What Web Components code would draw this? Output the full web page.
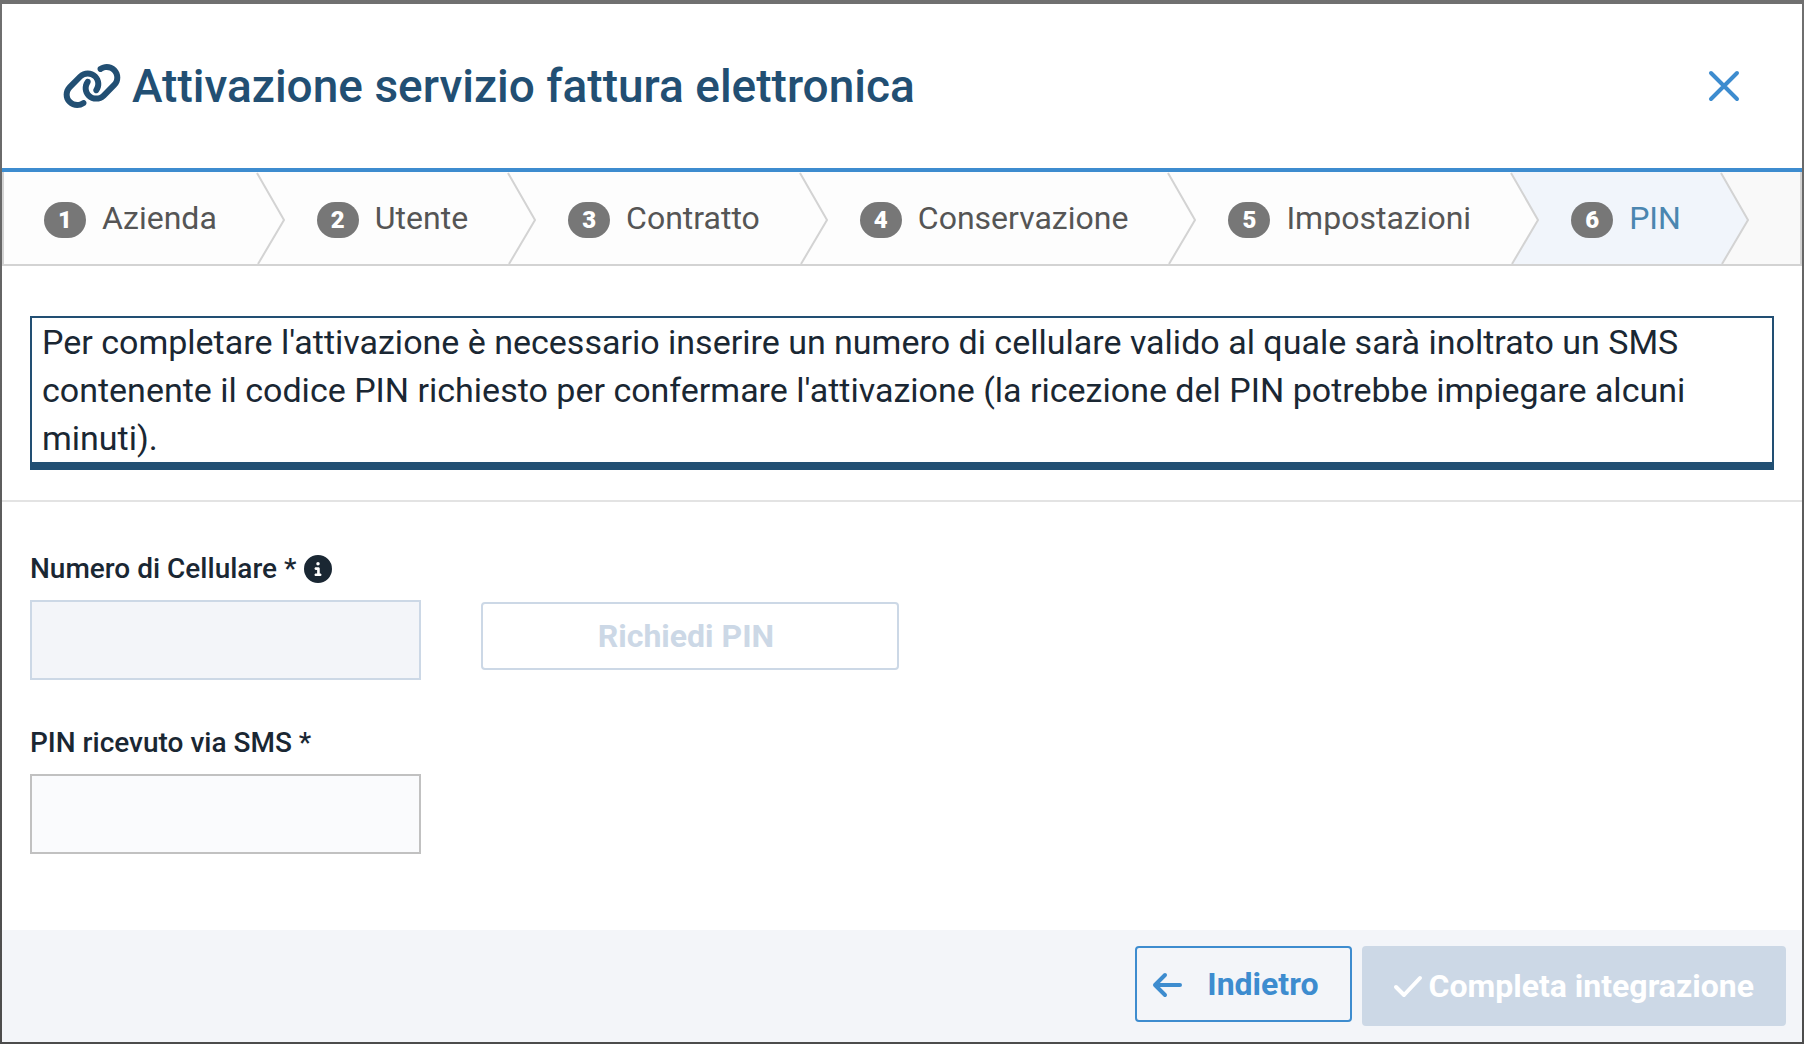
<!DOCTYPE html>
<html lang="it">
<head>
<meta charset="utf-8">
<meta name="viewport" content="width=device-width, initial-scale=1">
<title>Attivazione servizio fattura elettronica</title>
<style>
html {
	--navy: #224f73;
	--blue: #3d8ccf;
	--ink: #1a2733;
	--pale: #ccd8e6;
	--surface: #f3f5f9;
	--line: #d3d3d3;
	font-family: Roboto, "Liberation Sans", sans-serif;
	color: var(--ink);
}

body {
	box-sizing: border-box;
	min-height: 100vh;
	margin: 0;
	padding: 4px 2px 2px;
	display: flex;
	background: linear-gradient(#707070, #5c5c5c 50%, #4c4c4c);
}
</style>
</head>
<body>
<modal-dialog>
	<modal-header slot="header">Attivazione servizio fattura elettronica</modal-header>
	<wizard-steps slot="header">
		<wizard-step number="1" first>Azienda</wizard-step>
		<wizard-step number="2">Utente</wizard-step>
		<wizard-step number="3">Contratto</wizard-step>
		<wizard-step number="4">Conservazione</wizard-step>
		<wizard-step number="5">Impostazioni</wizard-step>
		<wizard-step number="6" active>PIN</wizard-step>
	</wizard-steps>
	<info-note>Per completare l'attivazione è necessario inserire un numero di cellulare valido al quale sarà inoltrato un SMS contenente il codice PIN richiesto per confermare l'attivazione (la ricezione del PIN potrebbe impiegare alcuni minuti).</info-note>
	<pin-form></pin-form>
	<action-button slot="footer" variant="outline" icon="arrow">Indietro</action-button>
	<action-button slot="footer" variant="solid" icon="check" disabled>Completa integrazione</action-button>
</modal-dialog>

<script>
const html = String.raw;

// Base class: clones the markup of the subclass into an open shadow root
class BaseElement extends HTMLElement {
	constructor() {
		super();
		const template = document.createElement('template');
		template.innerHTML = this.constructor.markup;
		this.attachShadow({ mode: 'open' });
		this.shadowRoot.appendChild(template.content.cloneNode(true));
	}
}

class ModalDialog extends BaseElement {
	static markup = html`
<style>
:host {
	flex: 1;
	min-width: 0;
	display: flex;
	flex-direction: column;
	background-color: #fff;
}

main {
	flex: 1;
}

footer {
	display: flex;
	justify-content: flex-end;
	align-items: flex-start;
	gap: 10px;
	padding: 16px;
	background-color: var(--surface);
}
</style>
<slot name="header"></slot>
<main><slot></slot></main>
<footer><slot name="footer"></slot></footer>
`;
}

class ModalHeader extends BaseElement {
	static markup = html`
<style>
:host {
	display: flex;
	justify-content: space-between;
	align-items: center;
	box-sizing: border-box;
	min-height: 168px;
	padding: 0 60px;
	border-bottom: 4px solid var(--blue);
}

h1 {
	display: flex;
	align-items: center;
	gap: 10px;
	margin: 0;
	font-size: 46px;
	font-weight: 500;
	line-height: 60px;
	color: var(--navy);
}

button {
	display: flex;
	padding: 0;
	border: 0;
	background: none;
	color: var(--blue);
	cursor: pointer;
}
</style>
<h1>
	<svg width="60" height="48" viewBox="0 0 640 512" fill="currentColor" aria-hidden="true"><path d="M579.8 267.7c56.5-56.5 56.5-148 0-204.5c-50-50-128.8-56.5-186.3-15.4l-1.6 1.1c-14.4 10.3-17.7 30.3-7.4 44.6s30.3 17.7 44.6 7.4l1.6-1.1c32.1-22.9 76-19.3 103.8 8.6c31.5 31.5 31.5 82.5 0 114L422.3 334.8c-31.5 31.5-82.5 31.5-114 0c-27.9-27.9-31.5-71.8-8.6-103.8l1.1-1.6c10.3-14.4 6.9-34.4-7.4-44.6s-34.4-6.9-44.6 7.4l-1.1 1.6C206.5 251.2 213 330 263 380c56.5 56.5 148 56.5 204.5 0L579.8 267.7zM60.2 244.3c-56.5 56.5-56.5 148 0 204.5c50 50 128.8 56.5 186.3 15.4l1.6-1.1c14.4-10.3 17.7-30.3 7.4-44.6s-30.3-17.7-44.6-7.4l-1.6 1.1c-32.1 22.9-76 19.3-103.8-8.6C74 372 74 321 105.5 289.5L217.7 177.2c31.5-31.5 82.5-31.5 114 0c27.9 27.9 31.5 71.8 8.6 103.9l-1.1 1.6c-10.3 14.4-6.9 34.4 7.4 44.6s34.4 6.9 44.6-7.4l1.1-1.6C433.5 260.8 427 182 377 132c-56.5-56.5-148-56.5-204.5 0L60.2 244.3z"/></svg>
	<span><slot></slot></span>
</h1>
<button type="button" aria-label="Chiudi">
	<svg width="36" height="36" viewBox="0 0 36 36" fill="none" stroke="currentColor" stroke-width="4" stroke-linecap="round"><path d="M5 5l26 26M31 5L5 31"/></svg>
</button>
`;
}

class WizardSteps extends BaseElement {
	static markup = html`
<style>
:host {
	display: block;
	border: solid var(--line);
	border-width: 0 2px 2px;
	background-color: #f9f9f9;
}

nav {
	display: flex;
}
</style>
<nav aria-label="Passaggi"><slot></slot></nav>
`;
}

class WizardStep extends BaseElement {
	static markup = html`
<style>
:host {
	--step-back: #fdfdfd;
	--step-color: #555;
	--step-start: 60px;
	display: flex;
}

:host([active]) {
	--step-back: #f1f5fb;
	--step-color: #4b86b0;
}

:host([first]) {
	--step-start: 40px;
}

a {
	display: flex;
	align-items: center;
	gap: 16px;
	height: 92px;
	padding: 0 40px 0 var(--step-start);
	background-color: var(--step-back);
	color: var(--step-color);
	font-size: 32px;
	line-height: 48px;
	text-decoration: none;
}

.badge {
	box-sizing: border-box;
	width: 42px;
	margin-top: 4px;
	border-radius: 20px;
	background-color: #777;
	color: #fff;
	font-size: 24px;
	font-weight: 900;
	line-height: 36px;
	text-align: center;
}

/* The arrow tip lies over the start of the next step */
svg {
	position: relative;
	z-index: 1;
	flex: none;
	width: 28px;
	height: 92px;
	margin-right: -28px;
	overflow: visible;
}

.tip {
	fill: var(--step-back);
}

.edge {
	fill: none;
	stroke: var(--line);
	stroke-width: 2;
}
</style>
<a href="#"><span class="badge"></span><span class="label"><slot></slot></span></a>
<svg viewBox="0 0 28 92" aria-hidden="true"><path class="tip" d="M-2 0H0L27 48L1 92H-2Z"/><path class="edge" d="M0 1L27 48L1 92"/></svg>
`;

	connectedCallback() {
		this.shadowRoot.querySelector('.badge').textContent = this.getAttribute('number');
		if (this.hasAttribute('active')) {
			this.shadowRoot.querySelector('a').setAttribute('aria-current', 'step');
		}
	}
}

class InfoNote extends BaseElement {
	static markup = html`
<style>
:host {
	display: block;
	padding: 50px 28px 30px;
	border-bottom: 2px solid #e3e3e3;
}

p {
	margin: 0;
	padding: 0 10px;
	border: 2px solid var(--navy);
	border-bottom-width: 8px;
	font-size: 34px;
	line-height: 48px;
}
</style>
<p><slot></slot></p>
`;
}

class TextField extends BaseElement {
	static markup = html`
<style>
:host {
	display: flex;
	flex-direction: column;
	gap: 11px;
}

.caption {
	display: flex;
	align-items: center;
	gap: 8px;
	white-space: nowrap;
}

label {
	font-size: 28px;
	font-weight: 500;
	line-height: 40px;
}

input {
	box-sizing: border-box;
	width: 100%;
	height: 80px;
	margin: 0;
	padding: 0 20px;
	border: 2px solid #c1c1c1;
	border-radius: 0;
	background-color: #fafbfd;
	color: inherit;
	font: inherit;
	font-size: 28px;
}

input:disabled {
	border-color: var(--pale);
	background-color: var(--surface);
}
</style>
<div class="caption">
	<label for="field"><slot></slot></label>
	<slot name="hint"></slot>
</div>
<input id="field" type="text">
`;

	connectedCallback() {
		const input = this.shadowRoot.querySelector('input');
		input.type = this.getAttribute('type') || 'text';
		input.disabled = this.hasAttribute('disabled');
	}
}

class ActionButton extends BaseElement {
	static markup = html`
<style>
:host {
	display: block;
}

button {
	box-sizing: border-box;
	width: 100%;
	display: flex;
	justify-content: center;
	align-items: center;
	min-height: 68px;
	margin: 0;
	padding: 0 16px 0 8px;
	border: 2px solid var(--blue);
	border-radius: 4px;
	background-color: transparent;
	color: var(--blue);
	font: inherit;
	font-size: 32px;
	font-weight: 700;
	line-height: 48px;
	cursor: pointer;
}

button:disabled {
	border-color: var(--pale);
	color: var(--pale);
	cursor: default;
}

:host([variant="outline"]) button {
	gap: 24px;
	min-height: 76px;
	padding: 0 32px 0 14px;
}

:host([variant="solid"]) button {
	gap: 4px;
	min-height: 80px;
	padding: 0 30px 0 28px;
	background-color: var(--pale);
	color: #fff;
}

svg {
	display: none;
	width: 32px;
	height: 32px;
	fill: none;
	stroke: currentColor;
	stroke-width: 4;
	stroke-linecap: round;
	stroke-linejoin: round;
}

:host([icon="arrow"]) .arrow,
:host([icon="check"]) .check {
	display: block;
}
</style>
<button type="button">
	<svg class="arrow" viewBox="0 0 32 32" aria-hidden="true"><path d="M29 17H4M14 7L4 17L14 27"/></svg>
	<svg class="check" viewBox="0 0 32 32" aria-hidden="true"><path d="M4 17L12 25L28 8"/></svg>
	<span><slot></slot></span>
</button>
`;

	connectedCallback() {
		this.shadowRoot.querySelector('button').disabled = this.hasAttribute('disabled');
	}
}

class PinForm extends BaseElement {
	static markup = html`
<style>
:host {
	display: block;
	padding: 47px 28px;
}

form {
	display: grid;
	grid-template-columns: 22.4% 24%;
	gap: 43px 60px;
	align-items: end;
}

.request {
	padding-bottom: 10px;
}

.pin {
	grid-column: 1;
}

svg {
	display: block;
}
</style>
<form>
	<text-field type="tel" disabled>
		Numero di Cellulare *
		<svg slot="hint" width="28" height="28" viewBox="0 0 512 512" fill="currentColor" aria-hidden="true"><path d="M256 512A256 256 0 1 0 256 0a256 256 0 1 0 0 512zM216 336h24V272H216c-13.3 0-24-10.7-24-24s10.7-24 24-24h48c13.3 0 24 10.7 24 24v88h8c13.3 0 24 10.7 24 24s-10.7 24-24 24H216c-13.3 0-24-10.7-24-24s10.7-24 24-24zm40-208a32 32 0 1 1 0 64 32 32 0 1 1 0-64z"/></svg>
	</text-field>
	<action-button class="request" disabled>Richiedi PIN</action-button>
	<text-field class="pin">PIN ricevuto via SMS *</text-field>
</form>
`;
}

customElements.define('modal-dialog', ModalDialog);
customElements.define('modal-header', ModalHeader);
customElements.define('wizard-steps', WizardSteps);
customElements.define('wizard-step', WizardStep);
customElements.define('info-note', InfoNote);
customElements.define('text-field', TextField);
customElements.define('action-button', ActionButton);
customElements.define('pin-form', PinForm);
</script>
</body>
</html>
